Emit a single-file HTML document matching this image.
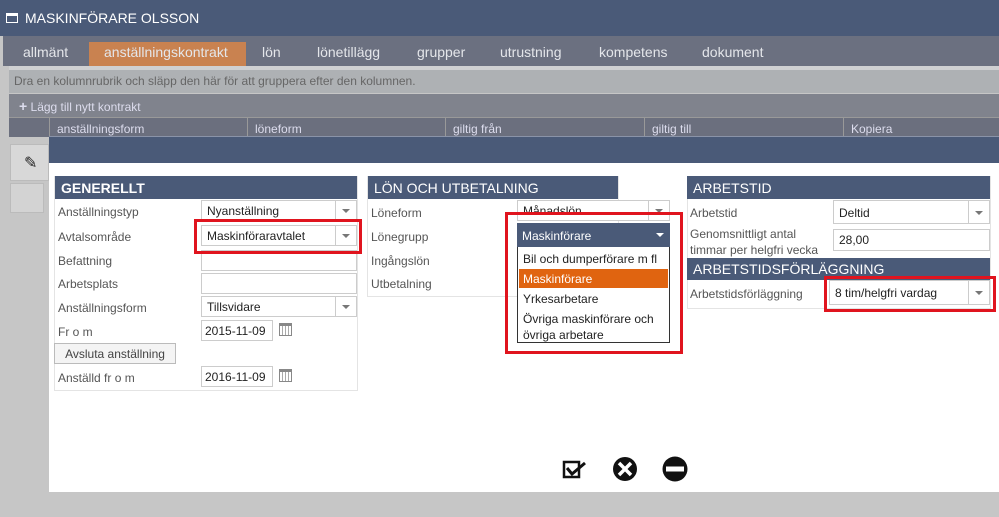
<!DOCTYPE html><html><head><meta charset="utf-8"><style>
*{box-sizing:border-box;margin:0;padding:0}
body{width:999px;height:517px;overflow:hidden;background:#c6c6c6;font-family:"Liberation Sans",sans-serif;position:relative;font-size:12px;color:#333}
.a{position:absolute;white-space:nowrap}
.hd{background:#4a5a78;color:#fff;font-size:14px;padding:4px 6px;height:23px}
.lb{color:#555;font-size:12px}
.in{background:#fff;border:1px solid #ccc;font-size:12px;color:#222;padding:3px 5px;height:21px}
.dd::after{content:"";position:absolute;right:0;top:0;width:20px;height:100%;border-left:1px solid #ccc}
.ar{position:absolute;right:6px;top:8px;width:0;height:0;border-left:4px solid transparent;border-right:4px solid transparent;border-top:4px solid #777}
.red{border:3px solid #e0141e}
.tab{position:absolute;top:44px;color:#e4e6ea;font-size:14px}
.cal{position:absolute;width:13px;height:13px;border:1px solid #888;border-top-width:3px;background:repeating-linear-gradient(90deg,#fff 0 2px,#aaa 2px 3px)}
</style></head><body>
<div class="a" style="left:0;top:0;width:999px;height:36px;background:#4a5a78"></div>
<div class="a" style="left:6px;top:13px;width:12px;height:10px;border:1.5px solid #fff;border-top-width:3px"></div>
<div class="a" style="left:25px;top:10px;color:#fff;font-size:14px">MASKINFÖRARE OLSSON</div>
<div class="a" style="left:3px;top:36px;width:996px;height:30px;background:#6b7080"></div>
<div class="a" style="left:89px;top:42px;width:157px;height:24px;background:#c98250"></div>
<div class="tab" style="left:23px">allmänt</div>
<div class="tab" style="left:104px">anställningskontrakt</div>
<div class="tab" style="left:262px">lön</div>
<div class="tab" style="left:317px">lönetillägg</div>
<div class="tab" style="left:417px">grupper</div>
<div class="tab" style="left:500px">utrustning</div>
<div class="tab" style="left:599px">kompetens</div>
<div class="tab" style="left:702px">dokument</div>
<div class="a" style="left:3px;top:66px;width:996px;height:451px;background:#c6c6c6"></div>
<div class="a" style="left:9px;top:66px;width:990px;height:4px;background:#cfd0d2"></div>
<div class="a" style="left:9px;top:70px;width:990px;height:23px;background:#aeb1b4;color:#666;font-size:12px;padding:4px 5px">Dra en kolumnrubrik och släpp den här för att gruppera efter den kolumnen.</div>
<div class="a" style="left:9px;top:94px;width:990px;height:23px;background:#80838d;color:#dde;font-size:12px;padding:4px 10px"><b style="font-size:14px">+</b> Lägg till nytt kontrakt</div>
<div class="a" style="left:9px;top:117px;width:990px;height:20px;background:#6b6f7e;border-top:1px solid #999"></div>
<div class="a" style="left:49px;top:117px;height:20px;width:950px;color:#dde;font-size:12px">
<span class="a" style="left:0;top:0;width:198px;height:20px;border-left:1px solid #999;padding:5px 7px">anställningsform</span>
<span class="a" style="left:198px;top:0;width:198px;height:20px;border-left:1px solid #999;padding:5px 7px">löneform</span>
<span class="a" style="left:396px;top:0;width:199px;height:20px;border-left:1px solid #999;padding:5px 7px">giltig från</span>
<span class="a" style="left:595px;top:0;width:199px;height:20px;border-left:1px solid #999;padding:5px 7px">giltig till</span>
<span class="a" style="left:794px;top:0;width:160px;height:20px;border-left:1px solid #999;padding:5px 7px">Kopiera</span></div>
<div class="a" style="left:10px;top:144px;width:39px;height:37px;background:#d8d8d8;border:1px solid #bbb"></div>
<div class="a" style="left:24px;top:153px;font-size:16px;color:#222">✎</div>
<div class="a" style="left:10px;top:183px;width:34px;height:30px;background:#d3d3d3;border:1px solid #bbb"></div>
<div class="a" style="left:49px;top:136px;width:950px;height:27px;background:#4a5a78;border-top:1px solid #8a93a8"></div>
<div class="a" style="left:49px;top:163px;width:950px;height:329px;background:#fff"></div>

<div class="a" style="left:54px;top:176px;width:304px;height:215px;border:1px solid #e4e4e4"></div>
<div class="a hd" style="left:55px;top:176px;width:302px;font-weight:bold">GENERELLT</div>
<div class="a lb" style="left:58px;top:205px">Anställningstyp</div>
<div class="a in dd" style="left:201px;top:200px;width:156px">Nyanställning<i class="ar"></i></div>
<div class="a lb" style="left:58px;top:230px">Avtalsområde</div>
<div class="a in dd" style="left:201px;top:225px;width:156px">Maskinföraravtalet<i class="ar"></i></div>
<div class="a lb" style="left:58px;top:254px">Befattning</div>
<div class="a in" style="left:201px;top:250px;width:156px"></div>
<div class="a lb" style="left:58px;top:277px">Arbetsplats</div>
<div class="a in" style="left:201px;top:273px;width:156px"></div>
<div class="a lb" style="left:58px;top:301px">Anställningsform</div>
<div class="a in dd" style="left:201px;top:296px;width:156px">Tillsvidare<i class="ar"></i></div>
<div class="a lb" style="left:58px;top:325px">Fr o m</div>
<div class="a in" style="left:201px;top:320px;width:72px;padding:3px 3px">2015-11-09</div>
<div class="cal" style="left:279px;top:323px"></div>
<div class="a" style="left:54px;top:343px;width:122px;height:21px;background:#f4f4f4;border:1px solid #bbb;text-align:center;padding-top:3px;color:#444">Avsluta anställning</div>
<div class="a lb" style="left:58px;top:371px">Anställd fr o m</div>
<div class="a in" style="left:201px;top:366px;width:72px;padding:3px 3px">2016-11-09</div>
<div class="cal" style="left:279px;top:369px"></div>
<div class="a red" style="left:194px;top:219px;width:168px;height:35px"></div>

<div class="a" style="left:367px;top:176px;width:252px;height:121px;border:1px solid #e4e4e4"></div>
<div class="a hd" style="left:368px;top:176px;width:250px">LÖN OCH UTBETALNING</div>
<div class="a lb" style="left:371px;top:206px">Löneform</div>
<div class="a in dd" style="left:517px;top:200px;width:153px">Månadslön<i class="ar"></i></div>
<div class="a lb" style="left:371px;top:230px">Lönegrupp</div>
<div class="a lb" style="left:371px;top:254px">Ingångslön</div>
<div class="a lb" style="left:371px;top:277px">Utbetalning</div>
<div class="a" style="left:517px;top:237px;width:153px;height:106px;background:#fff;border:1px solid #333"></div>
<div class="a" style="left:517px;top:223px;width:153px;height:24px;background:#4a5a78;color:#fff;padding:6px 5px">Maskinförare<i class="ar" style="border-top-color:#fff;top:10px"></i></div>
<div class="a" style="left:523px;top:252px;color:#222">Bil och dumperförare m fl</div>
<div class="a" style="left:519px;top:269px;width:149px;height:19px;background:#e06410;color:#fff;padding:3px 4px">Maskinförare</div>
<div class="a" style="left:523px;top:292px;color:#222">Yrkesarbetare</div>
<div class="a" style="left:523px;top:311px;color:#222;line-height:16px">Övriga maskinförare och<br>övriga arbetare</div>
<div class="a red" style="left:505px;top:212px;width:178px;height:142px"></div>

<div class="a" style="left:687px;top:176px;width:304px;height:133px;border:1px solid #e4e4e4"></div>
<div class="a hd" style="left:687px;top:176px;width:303px">ARBETSTID</div>
<div class="a lb" style="left:690px;top:206px">Arbetstid</div>
<div class="a in dd" style="left:833px;top:200px;width:157px;height:24px;padding-top:5px">Deltid<i class="ar" style="top:10px"></i></div>
<div class="a lb" style="left:690px;top:226px;line-height:16px">Genomsnittligt antal<br>timmar per helgfri vecka</div>
<div class="a in" style="left:833px;top:229px;width:157px;height:22px">28,00</div>
<div class="a hd" style="left:687px;top:258px;width:303px;height:22px;padding-top:3px">ARBETSTIDSFÖRLÄGGNING</div>
<div class="a lb" style="left:690px;top:287px">Arbetstidsförläggning</div>
<div class="a in dd" style="left:829px;top:280px;width:161px;height:25px;padding-top:5px">8 tim/helgfri vardag<i class="ar" style="top:10px"></i></div>
<div class="a red" style="left:824px;top:276px;width:172px;height:36px"></div>

<svg class="a" style="left:560px;top:456px" width="140" height="28" viewBox="0 0 140 28">
<rect x="4" y="6" width="15" height="15" fill="none" stroke="#111" stroke-width="2.5"/>
<path d="M7 12 L12 18 L25 7" fill="none" stroke="#111" stroke-width="3"/>
<circle cx="65" cy="13" r="12" fill="#111"/>
<path d="M59 7 L71 19 M71 7 L59 19" stroke="#fff" stroke-width="3.5"/>
<circle cx="115" cy="13" r="12.5" fill="#111"/>
<rect x="106" y="10.5" width="18" height="5" fill="#fff"/>
</svg>
</body></html>
